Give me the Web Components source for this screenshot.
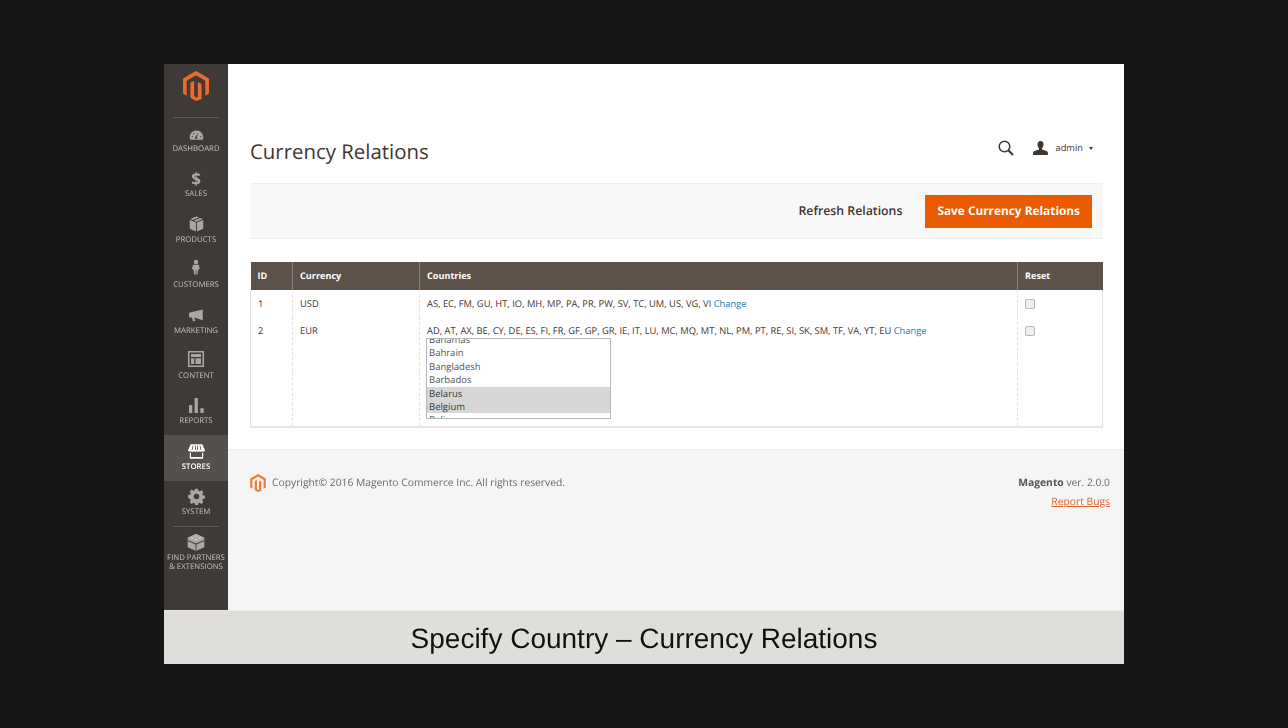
<!DOCTYPE html>
<html>
<head>
<meta charset="utf-8">
<title>Currency Relations</title>
<style>
html, body { margin: 0; height: 100%; background: #161616; }
body { display: flex; align-items: center; justify-content: center; height: 728px; font-family: "Open Sans", sans-serif; overflow: hidden; text-rendering: geometricPrecision; }
svg { display: block; }
</style>
</head>
<body>
<admin-frame>
  <admin-sidebar slot="sidebar">
    <nav-item label="DASHBOARD"><svg viewBox="0.5 1 19 13" width="15" height="10" style="transform:translateY(1px)"><path fill="#aaa6a0" d="M10 1.500C4.800 1.500 1.200 5.600 1.200 10.500c0 1.200.2 2.200.6 3.200h16.400c.4-1 .6-2 .6-3.200 0-4.900-3.600-9-8.800-9z"/><path fill="#3f3a38" d="M12.600 3.800l-2 6.200a1.500 1.500 0 1 1-1.500-.3z"/><circle cx="4.500" cy="9.500" r=".8" fill="#3f3a38"/><circle cx="6.500" cy="5.800" r=".8" fill="#3f3a38"/><circle cx="15.500" cy="9.500" r=".8" fill="#3f3a38"/></svg></nav-item>
    <nav-item label="SALES"><span style="font:700 17px/17px 'Open Sans',sans-serif;color:#aaa6a0">$</span></nav-item>
    <nav-item label="PRODUCTS"><svg viewBox="0 0 16 17" width="15" height="16"><path fill="#aaa6a0" d="M8 .5l2.800 1.100-6.900 2.700L1.300 3.200zM12 2.100l2.700 1.100L8 6 5.200 4.900zM.8 4.300l6.700 2.700v9.500L.8 13.600zM15.200 4.300v9.300l-6.700 2.900V7z"/></svg></nav-item>
    <nav-item label="CUSTOMERS"><svg viewBox="0 0 12 18" width="10" height="18" style="transform:translateY(-3px)"><circle cx="6" cy="3" r="2.700" fill="#aaa6a0"/><path fill="#aaa6a0" d="M2.500 6.300h7l.9 5.200-1.600.4-.5 1.200-.5 4.900H6.400V12.500h-.8V18H3.700l-.5-4.900-.5-1.200-1.600-.4z"/></svg></nav-item>
    <nav-item label="MARKETING"><svg viewBox="0 0 18 15" width="16" height="13"><path fill="#aaa6a0" d="M16.800 .6v12.300L7 9.800l1.200 3.900-2.600.8-1.400-4.600-2.300-.2A1 1 0 0 1 1 8.700V5a1 1 0 0 1 .9-1z"/></svg></nav-item>
    <nav-item label="CONTENT"><svg viewBox="0 0 16 16" width="16" height="16" style="transform:translateY(-1px)"><path fill="#aaa6a0" fill-rule="evenodd" d="M0 0h16v16H0zM1.500 1.500v13h13v-13z"/><path fill="#aaa6a0" d="M3 3h10v3H3zM3 7.300h3.200V13H3zM7.500 7.300H13V13H7.500z"/></svg></nav-item>
    <nav-item label="REPORTS"><svg viewBox="0 0 15 15" width="15" height="15"><path fill="#aaa6a0" d="M0 7h3.300v8H0zM5.600 0h3.300v15H5.600zM11.400 10.300h3.300V15h-3.300z"/></svg></nav-item>
    <nav-item label="STORES" active><svg viewBox="0 0 19 16" width="17" height="15"><path fill="#fff" d="M3 0h13l3 6.500a2 2 0 0 1-3.200 1.300 2.500 2.500 0 0 1-3.100 0 2.500 2.500 0 0 1-3.200 0 2.500 2.500 0 0 1-3.100 0 2.500 2.500 0 0 1-3.200 0A2 2 0 0 1 0 6.500z"/><path fill="#5a5551" d="M5.300 1.200h.9L5 6.400H4zM8.200 1.200h.9l-.3 5.200h-1zM10 1.200h.9l.4 5.200h-1zM12.900 1.200h.9L15 6.400h-1z"/><path fill="#fff" d="M2 9.500h1.300v4.700h12.400V9.500H17V16H2z"/></svg></nav-item>
    <nav-item label="SYSTEM"><svg viewBox="-1 -1 26 26" width="17" height="17"><path fill="#aaa6a0" fill-rule="evenodd" d="M14.200 0l.7 3.300 1.900.8 2.900-1.800 3 3-1.900 2.800.8 1.900 3.300.8v4.300l-3.300.7-.8 1.900 1.800 2.900-3 3-2.800-1.900-1.900.8-.7 3.300H9.900l-.7-3.300-1.900-.8-2.900 1.800-3-3 1.900-2.800-.8-1.900L-.8 14v-4.300l3.300-.7.8-1.900L1.500 4.200l3-3 2.800 1.900 1.900-.8L9.900 0zM12 7.800a4.200 4.200 0 1 0 0 8.400 4.200 4.200 0 0 0 0-8.400z"/></svg></nav-item>
    <nav-item label="FIND PARTNERS<br>&amp; EXTENSIONS" divided><svg viewBox="0 0 18 18" width="18" height="18"><path fill="#aaa6a0" d="M9 .8L.7 4.500v9.800L9 18l8.300-3.700V4.500z"/><path fill="#3f3a38" d="M.7 7L9 10.600 17.300 7l.3.800L9.400 11.400v6.600h-.8v-6.600L.4 7.800z"/><ellipse cx="5.200" cy="5" rx="1.800" ry="1" fill="#c9c5c0"/><ellipse cx="9" cy="3.300" rx="1.800" ry="1" fill="#c9c5c0"/><ellipse cx="12.800" cy="5" rx="1.800" ry="1" fill="#c9c5c0"/><ellipse cx="9" cy="6.800" rx="1.800" ry="1" fill="#c9c5c0"/></svg></nav-item>
  </admin-sidebar>

  <page-header slot="main" title="Currency Relations"></page-header>
  <action-bar slot="main"></action-bar>
  <relations-table slot="main"></relations-table>

  <admin-footer slot="footer"></admin-footer>
  <span slot="caption">Specify Country – Currency Relations</span>
</admin-frame>

<script>
const LOGO = "M12 24l-4.455-2.572v-12l2.97-1.715v12.001L12 21.429l1.485-.715V8.713l2.97 1.715v12L12 24zM22.391 6v12l-2.969 1.714V7.713L12 3.43 4.574 7.713v12.001L1.609 18V6L12 0l10.391 6z";

class AdminFrame extends HTMLElement {
    constructor() {
        super();
        this.attachShadow({mode:"open"}).innerHTML = `
<style>
:host { display: grid; grid-template-columns: 64px 1fr; grid-template-rows: 385px 161px 54px; width: 960px; height: 600px; filter: blur(.3px); }
.side { grid-row: 1 / 3; display: flex; }
.main { background: #fff; padding: 64px 21px 0 22px; min-width: 0; }
.foot { display: block; }
.caption { grid-column: 1 / 3; background: #e0dedb; border-top: 1px solid #e9e8e5; box-sizing: border-box; display: flex; align-items: center; justify-content: center;
  font: 400 28px/1 "Liberation Sans", Arial, sans-serif; color: #111; padding-top: 2px; }
</style>
<div class="side"><slot name="sidebar"></slot></div>
<div class="main"><slot name="main"></slot></div>
<div class="foot"><slot name="footer"></slot></div>
<div class="caption"><slot name="caption"></slot></div>
`;
    }
}

class AdminSidebar extends HTMLElement {
    constructor() {
        super();
        this.attachShadow({mode:"open"}).innerHTML = `
<style>
:host { display: flex; flex-direction: column; width: 64px; background: #3f3a38; }
.logo { height: 52.500px; display: flex; justify-content: center; padding-top: 7px; box-sizing: border-box; }
hr { border: 0; height: 1px; margin: 0 9px; background: #5f5a56; }
</style>
<div class="logo"><svg viewBox="0 0 24 24" width="30" height="30"><path fill="#ef6b2a" d="${LOGO}"/></svg></div>
<hr>
<slot></slot>
`;
    }
}

class NavItem extends HTMLElement {
    connectedCallback() {
        if (this.shadowRoot) return;
        this.attachShadow({mode:"open"}).innerHTML = `
<style>
:host { display: flex; flex-direction: column; align-items: center; height: 45.400px; box-sizing: border-box; padding-top: 7px; position: relative; color: #c4c0bb;
  font: 400 7.800px/9px "Open Sans", sans-serif; text-align: center; }
:host([active]) { background: #55504c; color: #fff; font-weight: 600; }
:host([divided])::before { content: ""; position: absolute; top: 0; left: 9px; right: 9px; height: 1px; background: #5f5a56; }
.icon { height: 18px; display: flex; align-items: center; justify-content: center; }
.label { margin-top: 2.500px; white-space: nowrap; }
</style>
<div class="icon"><slot></slot></div>
<div class="label">${this.getAttribute("label")}</div>
`;
    }
}

class PageHeader extends HTMLElement {
    connectedCallback() {
        if (this.shadowRoot) return;
        this.attachShadow({mode:"open"}).innerHTML = `
<style>
:host { display: flex; align-items: flex-start; justify-content: space-between; height: 55px; color: #41362f; }
h1 { margin: 8px 0 0; font: 400 20.400px/30px "Open Sans", sans-serif; color: #41362f; }
.tools { display: flex; align-items: center; margin: 10px 10px 0 0; font: 400 9.300px/20px "Open Sans", sans-serif; }
.user { display: flex; align-items: center; margin-left: 19px; }
.name { margin-left: 7px; color: #41362f; }
.caret { width: 0; height: 0; margin-left: 6px; border: 2.500px solid transparent; border-top: 3px solid #41362f; border-bottom: 0; }
</style>
<h1>${this.getAttribute("title")}</h1>
<div class="tools">
  <svg viewBox="0 0 16 16" width="16" height="16"><circle cx="6.500" cy="6.500" r="5.300" fill="none" stroke="#41362f" stroke-width="1.500"/><path d="M10.300 10.300L15 15" stroke="#41362f" stroke-width="2" fill="none"/></svg>
  <div class="user">
    <svg viewBox="0 0 15 14" width="15" height="14"><path fill="#41362f" d="M7.500 0c2 0 3 1.400 3 3.400 0 1.500-.6 3-1.500 3.700v1.300c1.800.5 4.600 1.300 5.500 2.300.4.400.5 2 .5 3.300H0c0-1.300.1-2.900.5-3.300 1-1 3.700-1.800 5.500-2.300V7.100c-.9-.7-1.500-2.200-1.500-3.700 0-2 1-3.400 3-3.400z"/></svg>
    <span class="name">admin</span><span class="caret"></span>
  </div>
</div>
`;
    }
}

class ActionBar extends HTMLElement {
    constructor() {
        super();
        this.attachShadow({mode:"open"}).innerHTML = `
<style>
:host { display: flex; align-items: center; justify-content: flex-end; height: 56px; box-sizing: border-box; padding-right: 11px; background: #f8f8f8; border-top: 1px solid #eeeeee; border-bottom: 1px solid #eeeeee; }
.refresh { font: 600 12.300px/1 "Open Sans", sans-serif; color: #41362f; margin-right: 23px; padding-top: 1px; }
.save { height: 33px; box-sizing: border-box; display: flex; align-items: center; padding: 1px 12px 0; background: #eb5b02; color: #fff; font: 700 11.850px/1 "Open Sans", sans-serif; }
</style>
<span class="refresh">Refresh Relations</span>
<span class="save">Save Currency Relations</span>
`;
    }
}

class RelationsTable extends HTMLElement {
    constructor() {
        super();
        const options = ["Bahamas","Bahrain","Bangladesh","Barbados","Belarus","Belgium","Belize"];
        this.attachShadow({mode:"open"}).innerHTML = `
<style>
:host { display: block; margin-top: 23px; font: 400 9.350px/14px "Open Sans", sans-serif; color: #41362f; }
table { width: 852px; border-collapse: collapse; table-layout: fixed; }
th { height: 28px; padding: 0 7px; background: #5d5249; color: #fff; font-size: 9.100px; font-weight: 700; text-align: left; border-left: 1px solid #8a8077; }
th:first-child { border-left: 0; }
td { padding: 7px 7px 6px; vertical-align: top; border-left: 1px dashed #e3e3e3; border-right: 1px dashed #e3e3e3; white-space: nowrap; }
td:first-child { border-left: 1px solid #e3e3e3; }
td:last-child { border-right: 1px solid #e3e3e3; }
tr:last-child td { border-bottom: 2px solid #e6e6e6; height: 110px; padding-bottom: 0; box-sizing: border-box; }
a { color: #1f79b8; text-decoration: none; }
.check { width: 8px; height: 8px; margin-top: 2px; border: 1px solid #b9b9b9; border-radius: 2px; background: #eeeeee; }
.select { width: 185px; height: 81px; margin-left: -1px; box-sizing: border-box; border: 1px solid #b5b5b5; background: #fff; overflow: hidden; }
.options { margin-top: -6px; }
.opt { height: 13.400px; line-height: 13.400px; padding-left: 2px; font-size: 9.500px; color: #555; }
.opt.sel { background: #d6d6d6; color: #3a3a3a; }
</style>
<table>
<colgroup><col style="width:42px"><col style="width:127px"><col style="width:598px"><col style="width:85px"></colgroup>
<tr><th>ID</th><th>Currency</th><th>Countries</th><th>Reset</th></tr>
<tr><td>1</td><td>USD</td><td>AS, EC, FM, GU, HT, IO, MH, MP, PA, PR, PW, SV, TC, UM, US, VG, VI <a>Change</a></td><td><div class="check"></div></td></tr>
<tr><td>2</td><td>EUR</td><td>AD, AT, AX, BE, CY, DE, ES, FI, FR, GF, GP, GR, IE, IT, LU, MC, MQ, MT, NL, PM, PT, RE, SI, SK, SM, TF, VA, YT, EU <a>Change</a>
<div class="select"><div class="options">${options.map(o => `<div class="opt${o === "Belarus" || o === "Belgium" ? " sel" : ""}">${o}</div>`).join("")}</div></div></td><td><div class="check"></div></td></tr>
</table>
`;
    }
}

class AdminFooter extends HTMLElement {
    constructor() {
        super();
        this.attachShadow({mode:"open"}).innerHTML = `
<style>
:host { display: flex; justify-content: space-between; height: 100%; box-sizing: border-box; padding: 24px 14px 0 22px; background: #f5f5f5; border-top: 1px solid #ececec; font: 400 10.300px/18.500px "Open Sans", sans-serif; color: #6a6a6a; }
.copy { display: flex; align-items: flex-start; }
.copy svg { margin: 0 5px 0 -1px; }
.ver { text-align: right; }
b { color: #555; font-weight: 700; }
a { display: block; color: #e2622a; text-decoration: underline; }
</style>
<div class="copy"><svg viewBox="0 0 24 24" width="18" height="18"><path fill="#ef7a36" d="${LOGO}"/></svg><span>Copyright© 2016 Magento Commerce Inc. All rights reserved.</span></div>
<div class="ver"><div><b>Magento</b> ver. 2.0.0</div><a>Report Bugs</a></div>
`;
    }
}

customElements.define("admin-frame", AdminFrame);
customElements.define("admin-sidebar", AdminSidebar);
customElements.define("nav-item", NavItem);
customElements.define("page-header", PageHeader);
customElements.define("action-bar", ActionBar);
customElements.define("relations-table", RelationsTable);
customElements.define("admin-footer", AdminFooter);
</script>
</body>
</html>
